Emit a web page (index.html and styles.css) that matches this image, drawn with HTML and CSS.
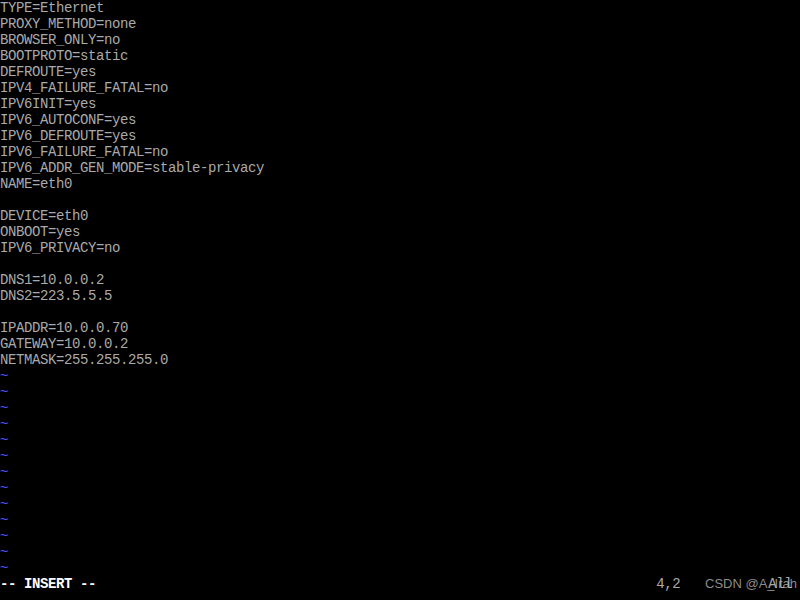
FILE: index.html
```html
<!DOCTYPE html>
<html>
<head>
<meta charset="utf-8">
<link rel="stylesheet" href="styles.css">
</head>
<body>
<div class="screen">
<pre class="buffer">TYPE=Ethernet
PROXY_METHOD=none
BROWSER_ONLY=no
BOOTPROTO=static
DEFROUTE=yes
IPV4_FAILURE_FATAL=no
IPV6INIT=yes
IPV6_AUTOCONF=yes
IPV6_DEFROUTE=yes
IPV6_FAILURE_FATAL=no
IPV6_ADDR_GEN_MODE=stable-privacy
NAME=eth0

DEVICE=eth0
ONBOOT=yes
IPV6_PRIVACY=no

DNS1=10.0.0.2
DNS2=223.5.5.5

IPADDR=10.0.0.70
GATEWAY=10.0.0.2
NETMASK=255.255.255.0
<span class="tilde">~
~
~
~
~
~
~
~
~
~
~
~
~</span>
<span class="mode">-- INSERT --</span>                                                                      4,2           All</pre>
<div class="watermark">CSDN @A_Irah</div>
</div>
</body>
</html>
```
FILE: styles.css
```css
html, body {
  margin: 0;
  padding: 0;
  background: #000;
}
.screen {
  position: relative;
  width: 800px;
  height: 600px;
  background: #000;
  overflow: hidden;
}
.buffer {
  margin: 0;
  font-family: "Liberation Mono", "DejaVu Sans Mono", monospace;
  font-size: 14px;
  letter-spacing: -0.4px;
  line-height: 16px;
  color: #aaaaaa;
  white-space: pre;
}
.tilde {
  color: #5555ff;
}
.mode {
  color: #ffffff;
  font-weight: bold;
}
.watermark {
  position: absolute;
  left: 705px;
  top: 576px;
  font-family: "Liberation Sans", Arial, sans-serif;
  font-size: 13px;
  line-height: 16px;
  color: rgba(190, 190, 190, 0.75);
}
```
